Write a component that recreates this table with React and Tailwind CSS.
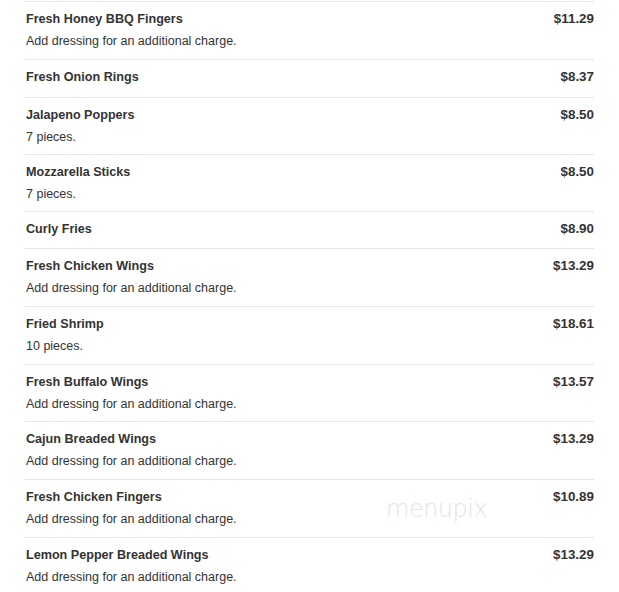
import React from 'react';

const items = [
    { name: "Fresh Honey BBQ Fingers", price: "$11.29", desc: "Add dressing for an additional charge.", h: "h-[58px]" },
    { name: "Fresh Onion Rings", price: "$8.37", h: "h-[38px]" },
    { name: "Jalapeno Poppers", price: "$8.50", desc: "7 pieces.", h: "h-[57px]" },
    { name: "Mozzarella Sticks", price: "$8.50", desc: "7 pieces.", h: "h-[57px]" },
    { name: "Curly Fries", price: "$8.90", h: "h-[37px]" },
    { name: "Fresh Chicken Wings", price: "$13.29", desc: "Add dressing for an additional charge.", h: "h-[58px]" },
    { name: "Fried Shrimp", price: "$18.61", desc: "10 pieces.", h: "h-[58px]" },
    { name: "Fresh Buffalo Wings", price: "$13.57", desc: "Add dressing for an additional charge.", h: "h-[57px]" },
    { name: "Cajun Breaded Wings", price: "$13.29", desc: "Add dressing for an additional charge.", h: "h-[58px]" },
    { name: "Fresh Chicken Fingers", price: "$10.89", desc: "Add dressing for an additional charge.", h: "h-[58px]" },
    { name: "Lemon Pepper Breaded Wings", price: "$13.29", desc: "Add dressing for an additional charge.", h: "h-[58px]" },
];

const App = () => {
    return (
        <div className="relative w-[619px] h-[592px] bg-white overflow-hidden font-['Liberation_Sans',Arial,sans-serif] text-[#333]">
            <div className="ml-[25px] w-[569px] pt-px">
                {items.map((item) => (
                    <div key={item.name} className={`${item.h} box-border border-t border-[#e6e6e6] pt-[9px] pl-px`}>
                        <div className="flex justify-between items-center h-[17px]">
                            <span className="text-[12.6px] font-bold">{item.name}</span>
                            <span className="text-[13.4px] font-bold">{item.price}</span>
                        </div>
                        {item.desc && (
                            <div className="text-[12.5px] leading-[20px] mt-[3px]">{item.desc}</div>
                        )}
                    </div>
                ))}
            </div>

            {/* watermark */}
            <div className="absolute left-[386px] top-[497px] text-[24px] font-extralight tracking-[-0.5px] text-[#e4e4e4] font-['DejaVu_Sans',sans-serif] leading-none">
                menupix
            </div>
        </div>
    );
};

export default App;
